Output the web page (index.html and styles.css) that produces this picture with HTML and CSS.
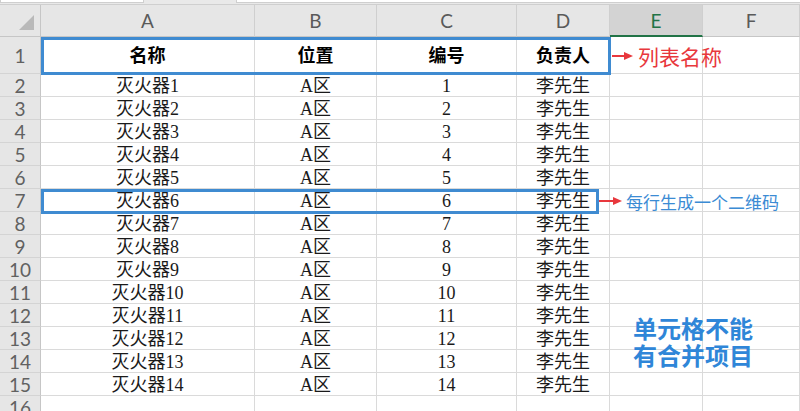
FILE: index.html
```html
<!DOCTYPE html>
<html lang="zh-CN">
<head>
    <meta charset="UTF-8">
    <title>灭火器列表</title>
    <link rel="stylesheet" href="styles.css">
</head>
<body>
    <div class="toolbar">
        <span class="tool-box tool-left"></span>
        <span class="tool-box tool-right"></span>
    </div>

    <div class="sheet">
        <div class="grid">
            <div class="corner"><span class="corner-mark"></span></div>
            <div class="col-head">A</div>
            <div class="col-head">B</div>
            <div class="col-head">C</div>
            <div class="col-head">D</div>
            <div class="col-head active">E</div>
            <div class="col-head">F</div>

            <div class="row-head">1</div>
            <div class="cell tall bold">名称</div>
            <div class="cell tall bold">位置</div>
            <div class="cell tall bold">编号</div>
            <div class="cell tall bold">负责人</div>
            <div class="cell tall"></div>
            <div class="cell tall"></div>

            <div class="row-head">2</div><div class="cell">灭火器1</div><div class="cell">A区</div><div class="cell">1</div><div class="cell">李先生</div><div class="cell"></div><div class="cell"></div>
            <div class="row-head">3</div><div class="cell">灭火器2</div><div class="cell">A区</div><div class="cell">2</div><div class="cell">李先生</div><div class="cell"></div><div class="cell"></div>
            <div class="row-head">4</div><div class="cell">灭火器3</div><div class="cell">A区</div><div class="cell">3</div><div class="cell">李先生</div><div class="cell"></div><div class="cell"></div>
            <div class="row-head">5</div><div class="cell">灭火器4</div><div class="cell">A区</div><div class="cell">4</div><div class="cell">李先生</div><div class="cell"></div><div class="cell"></div>
            <div class="row-head">6</div><div class="cell">灭火器5</div><div class="cell">A区</div><div class="cell">5</div><div class="cell">李先生</div><div class="cell"></div><div class="cell"></div>
            <div class="row-head">7</div><div class="cell">灭火器6</div><div class="cell">A区</div><div class="cell">6</div><div class="cell">李先生</div><div class="cell"></div><div class="cell"></div>
            <div class="row-head">8</div><div class="cell">灭火器7</div><div class="cell">A区</div><div class="cell">7</div><div class="cell">李先生</div><div class="cell"></div><div class="cell"></div>
            <div class="row-head">9</div><div class="cell">灭火器8</div><div class="cell">A区</div><div class="cell">8</div><div class="cell">李先生</div><div class="cell"></div><div class="cell"></div>
            <div class="row-head">10</div><div class="cell">灭火器9</div><div class="cell">A区</div><div class="cell">9</div><div class="cell">李先生</div><div class="cell"></div><div class="cell"></div>
            <div class="row-head">11</div><div class="cell">灭火器10</div><div class="cell">A区</div><div class="cell">10</div><div class="cell">李先生</div><div class="cell"></div><div class="cell"></div>
            <div class="row-head">12</div><div class="cell">灭火器11</div><div class="cell">A区</div><div class="cell">11</div><div class="cell">李先生</div><div class="cell"></div><div class="cell"></div>
            <div class="row-head">13</div><div class="cell">灭火器12</div><div class="cell">A区</div><div class="cell">12</div><div class="cell">李先生</div><div class="cell"></div><div class="cell"></div>
            <div class="row-head">14</div><div class="cell">灭火器13</div><div class="cell">A区</div><div class="cell">13</div><div class="cell">李先生</div><div class="cell"></div><div class="cell"></div>
            <div class="row-head">15</div><div class="cell">灭火器14</div><div class="cell">A区</div><div class="cell">14</div><div class="cell">李先生</div><div class="cell"></div><div class="cell"></div>
            <div class="row-head">16</div><div class="cell"></div><div class="cell"></div><div class="cell"></div><div class="cell"></div><div class="cell"></div><div class="cell"></div>
        </div>

        <!-- annotation overlays -->
        <div class="mark mark-title"></div>
        <div class="mark mark-row"></div>

        <div class="note note-title">
            <svg class="arrow" width="22" height="10" viewBox="0 0 22 10">
                <line x1="0" y1="5" x2="14" y2="5" stroke="#e8383d" stroke-width="2"/>
                <polygon points="12,1 21,5 12,9" fill="#e8383d"/>
            </svg>
            <span>列表名称</span>
        </div>

        <div class="note note-row">
            <svg class="arrow" width="24" height="10" viewBox="0 0 24 10">
                <line x1="0" y1="5" x2="16" y2="5" stroke="#e8383d" stroke-width="2"/>
                <polygon points="14,1 23,5 14,9" fill="#e8383d"/>
            </svg>
            <span>每行生成一个二维码</span>
        </div>

        <div class="note note-merge">
            <div class="merge-line">单元格不能</div>
            <div class="merge-line">有合并项目</div>
        </div>
    </div>
</body>
</html>
```

FILE: styles.css
```css
body {
    margin: 0;
    padding: 0;
    width: 800px;
    height: 411px;
    overflow: hidden;
    background-color: #fff;
    font-family: "Liberation Serif", "Noto Sans CJK SC", serif;
}

.toolbar {
    height: 4px;
    background-color: #e9e9e9;
    border-bottom: 1px solid #cfcfcf;
    position: relative;
}

.tool-box {
    position: absolute;
    top: 0;
    height: 2px;
    background-color: #fff;
    border: 1px solid #cfcfcf;
    border-top: none;
}

.tool-left {
    left: 0;
    width: 142px;
}

.tool-right {
    left: 236px;
    width: 564px;
}

.sheet {
    position: relative;
}

.grid {
    display: grid;
    grid-template-columns: 41px 214px 122px 140px 93px 93px 97px;
    grid-template-rows: 32px 37px repeat(15, 23px);
}

.corner,
.col-head,
.row-head {
    background-color: #e6e6e6;
    color: #5a5a5a;
    font-family: Lato, "Liberation Sans", sans-serif;
    box-sizing: border-box;
}

.corner {
    border-right: 1px solid #c6c6c6;
    border-bottom: 1px solid #c6c6c6;
    position: relative;
}

.corner-mark {
    position: absolute;
    right: 6px;
    bottom: 6px;
    width: 0;
    height: 0;
    border-left: 15px solid transparent;
    border-bottom: 15px solid #b9b9b9;
}

.col-head {
    display: flex;
    align-items: center;
    justify-content: center;
    font-size: 19px;
    border-right: 1px solid #cfcfcf;
    border-bottom: 1px solid #c6c6c6;
}

.col-head.active {
    background-color: #d3d3d3;
    color: #217346;
    border-bottom: 2px solid #217346;
}

.row-head {
    display: flex;
    align-items: center;
    justify-content: center;
    font-size: 19px;
    color: #616161;
    border-right: 1px solid #c6c6c6;
    border-bottom: 1px solid #d4d4d4;
}

.cell {
    font-size: 18px;
    line-height: 20px;
    padding-top: 2px;
    text-align: center;
    color: #1a1a1a;
    border-right: 1px solid #dadada;
    border-bottom: 1px solid #dadada;
    box-sizing: border-box;
    white-space: nowrap;
}

.cell.tall {
    line-height: 34px;
}

.bold {
    font-weight: bold;
    color: #000;
}

.mark {
    position: absolute;
    border: 3px solid #3f8bd1;
    box-sizing: border-box;
}

.mark-title {
    left: 41px;
    top: 32px;
    width: 570px;
    height: 38px;
}

.mark-row {
    left: 41px;
    top: 184px;
    width: 558px;
    height: 25px;
}

.note {
    position: absolute;
    display: flex;
    align-items: center;
    font-family: "Noto Sans CJK SC", sans-serif;
    white-space: nowrap;
}

.note-title {
    left: 612px;
    top: 36px;
    height: 30px;
    color: #e8383d;
    font-size: 21px;
}

.note-title .arrow {
    margin-right: 4px;
}

.note-row {
    left: 599px;
    top: 184px;
    height: 24px;
    color: #3b8bd4;
    font-size: 17px;
}

.note-row .arrow {
    margin-right: 3px;
}

.note-merge {
    left: 633px;
    top: 309px;
    display: block;
    color: #2f86d8;
    font-size: 24px;
    font-weight: bold;
}

.merge-line {
    height: 27px;
    line-height: 27px;
}
```
